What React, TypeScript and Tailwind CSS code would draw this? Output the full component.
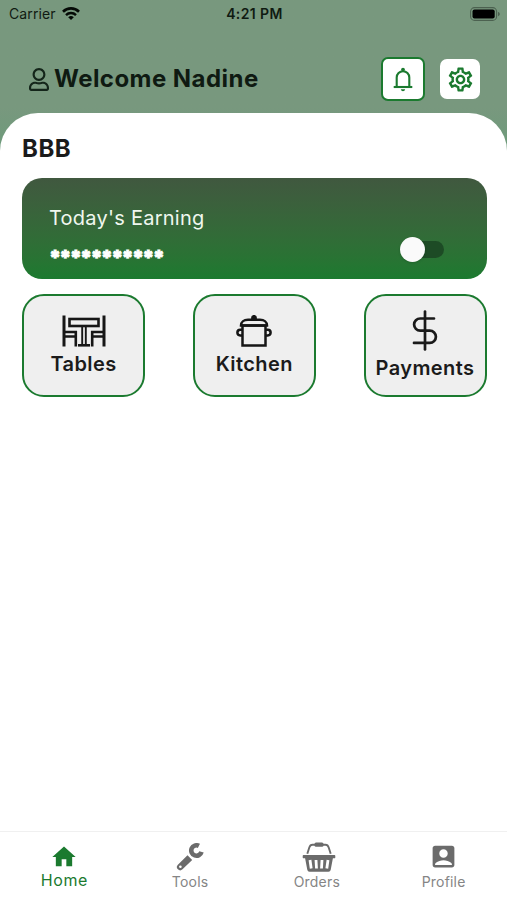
import { useState, type ReactNode } from "react";
import { FaRegUser } from "react-icons/fa";
import { MdAccountBox, MdHome, MdOutlineSettings } from "react-icons/md";

const WifiIcon = () => (
  <svg width="18" height="14" viewBox="0 0 18 14" fill="none" stroke="#050a06">
    <path d="M1 4.700a11.400 11.400 0 0 1 16 0" strokeWidth="2.600" />
    <path d="M4 8.100a7.100 7.100 0 0 1 10 0" strokeWidth="2.400" />
    <path d="M9 13.100 6.200 10.300a4 4 0 0 1 5.600 0z" fill="#050a06" stroke="none" />
  </svg>
);

const BatteryIcon = () => (
  <svg width="30" height="14" viewBox="0 0 30 14" fill="none">
    <rect x="0.6" y="0.6" width="26" height="12.8" rx="4" stroke="#4c6150" strokeWidth="1.1" />
    <rect x="2.5" y="2.5" width="22.2" height="9" rx="2" fill="#000" />
    <path d="M28 5v4.200c1.200-.4 1.800-1.200 1.800-2.100S29.200 5.400 28 5z" fill="#4c6150" />
  </svg>
);

const BellIcon = () => (
  <svg width="20" height="25" viewBox="0 0 20 25" fill="none" stroke="#1b7a2f" strokeWidth="2.100">
    <circle cx="10" cy="2.600" r="1.900" fill="#1b7a2f" stroke="none" />
    <path d="M3.700 19.500v-9a6.300 6.300 0 0 1 12.600 0v9" />
    <path d="M.7 20h18.600" />
    <path d="M7.800 22.300h4.400q-.4 1.900-2.200 1.900t-2.200-1.900z" fill="#1b7a2f" stroke="none" />
  </svg>
);

const TableIcon = () => (
  <svg width="44" height="32" viewBox="0 0 44 32" fill="none" stroke="#161616" strokeWidth="2.600">
    <path d="M2 .5V31.500M42 .5V31.500" strokeWidth="3" />
    <rect x="7.500" y="4" width="29" height="7" />
    <path d="M20.200 11v19M23.800 11v19" strokeWidth="1.900" />
    <path d="M16 30.300h12" />
    <path d="M3 17h10.800v14.500M41 17H30.200v14.500M3 21.500h10M41 21.500H31" />
  </svg>
);

const PotIcon = () => (
  <svg width="36" height="32" viewBox="0 0 36 32" fill="none" stroke="#161616" strokeWidth="2.500">
    <path d="M6.500 10.500h23V30.500h-23z" />
    <path d="M5 10.500c0-3.400 2.700-5.700 7-5.700h12c4.300 0 7 2.300 7 5.700z" />
    <circle cx="18" cy="2.900" r="1.700" fill="#161616" />
    <path d="M6.500 14.800H4.200a2.800 2.800 0 0 0 0 5.600h2.300M29.500 14.800h2.300a2.800 2.800 0 0 1 0 5.600h-2.300" />
  </svg>
);

const DollarIcon = () => (
  <svg width="26" height="41" viewBox="0 0 26 41" fill="none" stroke="#1a1a1a" strokeWidth="2.700" strokeLinecap="round">
    <path d="M13 1.500v38" />
    <path d="M22 8.500H8.200a6.100 6.100 0 0 0 0 12.200h9.600a6.100 6.100 0 0 1 0 12.200H2" />
  </svg>
);

const WrenchIcon = () => (
  <svg width="28" height="28" viewBox="0 0 28 28" fill="none">
    <path d="M22.900 2.900A5.200 5.200 0 1 0 25.500 8.850" stroke="#6b6b6b" strokeWidth="4.600" />
    <path d="M11.500 12.300 1.900 21.700a3.200 3.200 0 0 0 4.600 4.600L16.200 16.900z" fill="#6b6b6b" />
    <circle cx="4.400" cy="23.800" r="1.300" fill="#fff" />
  </svg>
);

const BasketIcon = () => (
  <svg width="34" height="30" viewBox="0 0 34 30" fill="none">
    <path d="M5.300 11.800 7.300 5.500Q8.200 2.700 10.500 2.700h13Q25.800 2.700 26.700 5.500L28.700 11.800" stroke="#6b6b6b" strokeWidth="1.900" />
    <rect x="12.500" y="0.500" width="9" height="4.300" rx="1.500" fill="#6b6b6b" />
    <path d="M1.500 13h31q.8 0 .8.900v1.500q0 .9-1 .9h-1.400l-2.200 11.400q-.3 2-2.200 2H7.500q-1.900 0-2.200-2L3.100 16.300H1.700q-1 0-1-.9v-1.500q0-.9.800-.9z" fill="#6b6b6b" />
    <path d="m8 18 1.200 8.500M14 18l.5 8.500M20 18l-.5 8.500M26 18l-1.200 8.500" stroke="#fff" strokeWidth="2.800" />
  </svg>
);

interface MenuCardProps {
  icon: ReactNode;
  label: string;
}

const MenuCard = ({ icon, label }: MenuCardProps) => (
  <button className="flex h-[103px] w-[123px] flex-col items-center justify-center rounded-[22px] border-2 border-[#1b7a2f] bg-[#efefef] pt-px">
    {icon}
    <span className="pt-[3px] text-[20px] leading-[28px] font-semibold tracking-[0.4px] whitespace-nowrap text-[#1b1b1b]">
      {label}
    </span>
  </button>
);

interface TabItemProps {
  icon: ReactNode;
  label: string;
  active?: boolean;
}

const TabItem = ({ icon, label, active }: TabItemProps) => (
  <button className="flex flex-1 flex-col items-center pt-[9px]">
    <span className="flex h-[31px] items-center justify-center">{icon}</span>
    <span
      className={
        active
          ? "pl-[2px] text-[16px] leading-[17px] tracking-[0.6px] text-[#1b7a2f]"
          : "pt-px text-[14px] leading-[17px] tracking-[0.2px] text-[#858585]"
      }
    >
      {label}
    </span>
  </button>
);

const App = () => {
  const [visible, setVisible] = useState(false);

  return (
    <div className="flex h-[900px] w-[507px] flex-col overflow-hidden bg-linear-to-b from-[#78987e] via-[#78987e] via-[12%] to-[#649d78] to-[20%] font-['Inter',sans-serif]">
      <div className="grid h-[27px] shrink-0 grid-cols-3 items-center pr-[7px] pl-[9px] text-[#101b12]">
        <div className="flex items-center gap-[6px] text-[14px] tracking-[0.1px]">
          Carrier
          <WifiIcon />
        </div>
        <div className="text-center text-[14px] font-semibold tracking-[0.4px]">4:21 PM</div>
        <div className="flex justify-end">
          <BatteryIcon />
        </div>
      </div>

      <header className="flex h-[86px] shrink-0 items-center justify-between pt-[18px] pr-[27px] pl-[29px]">
        <div className="flex items-center gap-[5px]">
          <FaRegUser className="h-[23px] w-[20px] text-[#14251a]" />
          <h1 className="text-[24px] leading-[30px] font-bold tracking-[0.45px] whitespace-nowrap text-[#0f1a12]">
            Welcome Nadine
          </h1>
        </div>
        <div className="flex items-center gap-[15px]">
          <button className="flex h-[44px] w-[44px] items-center justify-center rounded-[7px] border-2 border-[#1b7a2f] bg-white">
            <BellIcon />
          </button>
          <button className="flex h-[40px] w-[40px] items-center justify-center rounded-[7px] bg-white">
            <MdOutlineSettings className="text-[29px] text-[#1b7a2f]" />
          </button>
        </div>
      </header>

      <main className="flex-1 rounded-t-[38px] bg-white pt-[21px] pr-[20.5px] pl-[22px]">
        <h2 className="text-[24px] leading-[30px] font-bold tracking-[0.5px] text-[#1b1b1b]">BBB</h2>

        <section className="mt-[14px] flex h-[101px] justify-between rounded-[20px] bg-linear-to-b from-[#40583f] to-[#1b7a2f] pr-[43px] pl-[27px]">
          <div className="pt-[27px] text-[#f0f7ef]">
            <p className="text-[20px] leading-[26px] tracking-[0.25px]">Today's Earning</p>
            <p className="mt-[17px] text-[20px] leading-[20px] font-black tracking-[-1.8px] text-white [-webkit-text-stroke:0.8px_white]">
              {visible ? "1,250.00" : "***********"}
            </p>
          </div>
          <button
            role="switch"
            aria-checked={visible}
            onClick={() => setVisible(!visible)}
            className="mt-[59px] flex h-[25px] w-[44px] items-center"
          >
            <span className="z-10 h-[25px] w-[25px] shrink-0 rounded-full bg-[#fafafa] shadow-sm" />
            <span className="-ml-[12px] h-[17px] w-[31px] rounded-r-full bg-[#1d4b25]" />
          </button>
        </section>

        <section className="mt-[15px] flex justify-between">
          <MenuCard icon={<TableIcon />} label="Tables" />
          <MenuCard icon={<PotIcon />} label="Kitchen" />
          <MenuCard icon={<DollarIcon />} label="Payments" />
        </section>
      </main>

      <nav className="flex h-[69px] shrink-0 border-t border-[#f0f0f0] bg-white">
        <TabItem active icon={<MdHome className="ml-[2px] text-[28px] text-[#1b7a2f]" />} label="Home" />
        <TabItem icon={<WrenchIcon />} label="Tools" />
        <TabItem
          icon={
            <span className="pl-[4px]">
              <BasketIcon />
            </span>
          }
          label="Orders"
        />
        <TabItem icon={<MdAccountBox className="text-[29px] text-[#6b6b6b]" />} label="Profile" />
      </nav>
    </div>
  );
};

export default App;
